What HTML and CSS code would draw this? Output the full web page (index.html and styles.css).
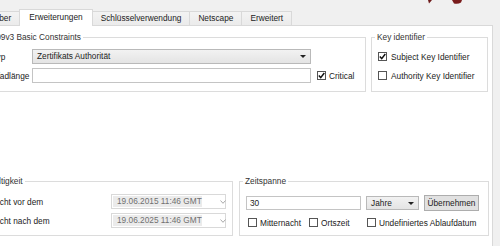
FILE: index.html
```html
<!DOCTYPE html>
<html lang="de">
<head>
	<meta charset="utf-8">
	<title>Zertifikat erstellen - Erweiterungen</title>
	<link rel="stylesheet" href="styles.css">
</head>
<body>
	<div class="window">
		<svg class="logo" width="40" height="6" viewBox="0 0 40 6">
			<path d="M3 0 L7 0 L4 3.5 Z" fill="#6e1b1b"/>
			<path d="M27 0 L37 0 L36 2.5 Q33 4.5 29 3.5 Z" fill="#7a1c1c"/>
		</svg>

		<div class="tabs">
			<div class="tab">Inhaber</div>
			<div class="tab active">Erweiterungen</div>
			<div class="tab">Schlüsselverwendung</div>
			<div class="tab">Netscape</div>
			<div class="tab">Erweitert</div>
		</div>

		<div class="panel">
			<div class="row">
				<fieldset class="group basic">
					<legend>X509v3 Basic Constraints</legend>
					<div class="form-grid">
						<span class="label">Typ</span>
						<div class="combo">Zertifikats Authorität<span class="arrow"></span></div>
						<span></span>
						<span class="label">Pfadlänge</span>
						<div class="edit"></div>
						<label class="check critical"><span class="box checked"></span>Critical</label>
					</div>
				</fieldset>

				<fieldset class="group keyid">
					<legend>Key identifier</legend>
					<div class="check-list">
						<label class="check"><span class="box checked"></span>Subject Key Identifier</label>
						<label class="check"><span class="box"></span>Authority Key Identifier</label>
					</div>
				</fieldset>
			</div>

			<div class="row bottom">
				<fieldset class="group validity">
					<legend>Gültigkeit</legend>
					<div class="date-grid">
						<span class="label">Nicht vor dem</span>
						<div class="date"><span class="value">19.06.2015 11:46 GMT</span><span class="drop"></span></div>
						<span class="label">Nicht nach dem</span>
						<div class="date"><span class="value">19.06.2025 11:46 GMT</span><span class="drop"></span></div>
					</div>
				</fieldset>

				<fieldset class="group span">
					<legend>Zeitspanne</legend>
					<div class="span-row">
						<div class="edit number">30</div>
						<div class="combo small">Jahre<span class="arrow"></span></div>
						<div class="button">Übernehmen</div>
					</div>
					<div class="span-options">
						<label class="check"><span class="box"></span>Mitternacht</label>
						<label class="check"><span class="box"></span>Ortszeit</label>
						<label class="check"><span class="box"></span>Undefiniertes Ablaufdatum</label>
					</div>
				</fieldset>
			</div>
		</div>
	</div>
</body>
</html>
```

FILE: styles.css
```css
body{margin:0;background:#f0f0f0;font-family:"Liberation Sans",Arial,sans-serif;font-size:8.3px;color:#222;overflow:hidden;}
.window{position:relative;width:500px;height:246px;overflow:hidden;}
.logo{position:absolute;left:425px;top:0;}

/* tabs */
.tabs{display:flex;align-items:flex-end;height:16px;padding-top:9px;margin-left:-25px;}
.tab{height:13px;line-height:13px;padding:0 8px;border:1px solid #d9d9d9;border-bottom:0;margin-left:-1px;background:linear-gradient(#f3f3f3,#ebebeb);white-space:nowrap;}
.tab.active{position:relative;z-index:1;height:16px;line-height:15px;margin-bottom:-1px;padding:0 9px;background:#fff;}

/* page */
.panel{width:513px;height:240px;margin-left:-20px;padding:6px 0 0 4px;box-sizing:border-box;background:#fff;border:1px solid #d9d9d9;}
.row{display:flex;gap:5px;}
.row.bottom{margin-top:84px;gap:6px;}
.group{margin:0;padding:7px 6px 0;border:1px solid #dcdcdc;box-sizing:border-box;height:60px;min-width:0;}
.group legend{padding:0 2px;margin-left:-3px;line-height:10px;color:#333;white-space:nowrap;}
.basic{width:381px;}
.basic legend{margin-left:-8px;}
.validity legend{margin-left:-6px;}
.keyid{width:117px;}
.validity{width:248px;padding-top:8px;}
.span{width:250px;padding-top:9px;}

/* controls */
.form-grid{display:grid;grid-template-columns:40px 279px auto;row-gap:4px;align-items:center;}
.label{white-space:nowrap;}
.combo{position:relative;height:15px;line-height:13px;padding:0 4px;box-sizing:border-box;border:1px solid #b9b9b9;background:linear-gradient(#f2f2f2,#e4e4e4);white-space:nowrap;}
.arrow{position:absolute;right:4px;top:5px;border:3px solid transparent;border-top:3px solid #222;border-bottom:0;}
.edit{height:15px;line-height:13px;padding:0 3px;box-sizing:border-box;border:1px solid #c4c4c4;background:#fff;}
.check{display:flex;align-items:center;height:15px;white-space:nowrap;}
.box{width:9px;height:9px;margin-right:3px;box-sizing:border-box;border:1px solid #555;background:#fff;flex:none;}
.box.checked{background:#fff url("data:image/svg+xml,%3Csvg xmlns='http://www.w3.org/2000/svg' width='7' height='7'%3E%3Cpath d='M0.8 3.6 L2.7 5.6 L6.3 1' fill='none' stroke='%23111' stroke-width='1.5'/%3E%3C/svg%3E") center/7px 7px no-repeat;}
.critical{margin-left:6px;}
.check-list{display:flex;flex-direction:column;gap:4px;}
.check-list .box{margin-right:4px;}

.date-grid{display:grid;grid-template-columns:119px 115px;row-gap:4px;align-items:center;}
.date{display:flex;height:15px;box-sizing:border-box;border:1px solid #d9d9d9;background:#fff;}
.date .value{flex:1;margin:1px 0 1px 1px;padding-left:4px;line-height:11px;background:#ebebeb;color:#707070;white-space:nowrap;}
.date .drop{flex:none;width:27px;background:url("data:image/svg+xml,%3Csvg xmlns='http://www.w3.org/2000/svg' width='6' height='4'%3E%3Cpath d='M0.5 0.5 L3 3.3 L5.5 0.5' fill='none' stroke='%23a0a0a0' stroke-width='0.9'/%3E%3C/svg%3E") 18px 5px no-repeat;}

.span-row{display:flex;align-items:center;gap:5px;height:16px;}
.number{width:115px;height:14px;line-height:12px;}
.combo.small{width:53px;height:14px;line-height:12px;}
.button{width:55px;height:16px;line-height:14px;box-sizing:border-box;text-align:center;border:1px solid #adadad;background:#e1e1e1;}
.span-options{display:grid;grid-template-columns:61px 58px auto;margin-top:4px;padding-left:2px;}
```
